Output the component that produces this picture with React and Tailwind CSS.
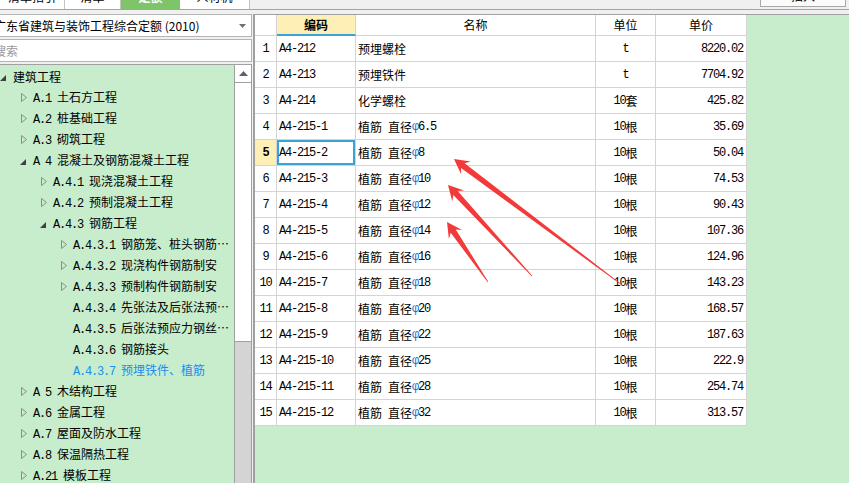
const MONO = "font-['Liberation_Mono',monospace] text-[12px] tracking-[-1.2px]";

function Mix({ s }) {
  const runs = [];
  for (const ch of s) {
    const half = ch.charCodeAt(0) < 0x2000;
    const last = runs[runs.length - 1];
    if (last && last.half === half) last.text += ch;
    else runs.push({ half, text: ch });
  }
  return runs.map((r, i) =>
    r.half ? (
      <span key={i} className={`${MONO} whitespace-pre`}>
        {r.text}
      </span>
    ) : (
      <span key={i}>{r.text}</span>
    )
  );
}

const tree = [
  { lv: 0, open: true, t: '建筑工程' },
  { lv: 1, shut: true, t: 'A.1 土石方工程' },
  { lv: 1, shut: true, t: 'A.2 桩基础工程' },
  { lv: 1, shut: true, t: 'A.3 砌筑工程' },
  { lv: 1, open: true, t: 'A 4 混凝土及钢筋混凝土工程' },
  { lv: 2, shut: true, t: 'A.4.1 现浇混凝土工程' },
  { lv: 2, shut: true, t: 'A.4.2 预制混凝土工程' },
  { lv: 2, open: true, t: 'A.4.3 钢筋工程' },
  { lv: 3, shut: true, t: 'A.4.3.1 钢筋笼、桩头钢筋…' },
  { lv: 3, shut: true, t: 'A.4.3.2 现浇构件钢筋制安' },
  { lv: 3, shut: true, t: 'A.4.3.3 预制构件钢筋制安' },
  { lv: 3, t: 'A.4.3.4 先张法及后张法预…' },
  { lv: 3, t: 'A.4.3.5 后张法预应力钢丝…' },
  { lv: 3, t: 'A.4.3.6 钢筋接头' },
  { lv: 3, t: 'A.4.3.7 预埋铁件、植筋', sel: true },
  { lv: 1, shut: true, t: 'A 5 木结构工程' },
  { lv: 1, shut: true, t: 'A.6 金属工程' },
  { lv: 1, shut: true, t: 'A.7 屋面及防水工程' },
  { lv: 1, shut: true, t: 'A.8 保温隔热工程' },
  { lv: 1, shut: true, t: 'A.21 模板工程' },
];

const indent = ['pl-0', 'pl-5', 'pl-10', 'pl-15'];

const rows = [
  ['A4-212', '预埋螺栓', null, 't', '8220.02'],
  ['A4-213', '预埋铁件', null, 't', '7704.92'],
  ['A4-214', '化学螺栓', null, '10套', '425.82'],
  ['A4-215-1', '植筋 直径', '6.5', '10根', '35.69'],
  ['A4-215-2', '植筋 直径', '8', '10根', '50.04'],
  ['A4-215-3', '植筋 直径', '10', '10根', '74.53'],
  ['A4-215-4', '植筋 直径', '12', '10根', '90.43'],
  ['A4-215-5', '植筋 直径', '14', '10根', '107.36'],
  ['A4-215-6', '植筋 直径', '16', '10根', '124.96'],
  ['A4-215-7', '植筋 直径', '18', '10根', '143.23'],
  ['A4-215-8', '植筋 直径', '20', '10根', '168.57'],
  ['A4-215-9', '植筋 直径', '22', '10根', '187.63'],
  ['A4-215-10', '植筋 直径', '25', '10根', '222.9'],
  ['A4-215-11', '植筋 直径', '28', '10根', '254.74'],
  ['A4-215-12', '植筋 直径', '32', '10根', '313.57'],
];

function arrowPoints(tx, ty, px, py) {
  const dx = px - tx;
  const dy = py - ty;
  const len = Math.hypot(dx, dy);
  const ux = dx / len;
  const uy = dy / len;
  const nx = -uy;
  const ny = ux;
  const head = 15;
  const neck = head - 4;
  const pts = [
    [tx + nx * 0.4, ty + ny * 0.4],
    [px - ux * neck + nx * 3, py - uy * neck + ny * 3],
    [px - ux * head + nx * 8, py - uy * head + ny * 8],
    [px, py],
    [px - ux * head - nx * 8, py - uy * head - ny * 8],
    [px - ux * neck - nx * 3, py - uy * neck - ny * 3],
    [tx - nx * 0.4, ty - ny * 0.4],
  ];
  return pts.map((p) => p.map((v) => v.toFixed(1)).join(',')).join(' ');
}

function Collapsed() {
  return (
    <svg width="6" height="9" viewBox="0 0 6 9" className="ml-[1px]">
      <path d="M0.5 0.5L5.5 4.5L0.5 8.5Z" fill="none" stroke="#8c8c8c" strokeWidth="1" />
    </svg>
  );
}

function Expanded() {
  return (
    <svg width="6" height="6" viewBox="0 0 6 6" className="mt-[3px]">
      <path d="M6 0L6 6L0 6Z" fill="#404040" />
    </svg>
  );
}

export default function App() {
  return (
    <div className="relative w-[849px] h-[483px] overflow-hidden bg-[#f0f0f0] font-['Noto_Sans_CJK_SC',sans-serif] text-[12px] text-black">
      {/* tab strip, cut off at the top */}
      <div className="h-[14px]">
        <div className="flex h-[9px] overflow-hidden">
          <div className="w-[65px] bg-white border-r border-[#c4c4c4] flex justify-center">
            <span className="leading-[12px] mt-[-9px] whitespace-nowrap">清单指引</span>
          </div>
          <div className="w-[56px] bg-white border-r border-[#c4c4c4] flex justify-center">
            <span className="leading-[12px] mt-[-9px]">清单</span>
          </div>
          <div className="w-[59px] bg-[#80c46a] flex justify-center">
            <span className="leading-[12px] mt-[-9px] text-white font-bold">定额</span>
          </div>
          <div className="w-[70px] bg-white border-r border-[#c4c4c4] flex justify-center">
            <span className="leading-[12px] mt-[-9px]">人材机</span>
          </div>
          <div className="ml-auto mr-[3px] w-[86px] h-[7px] bg-[#fbfbfb] border border-t-0 border-[#a8a8a8] flex justify-center overflow-hidden">
            <span className="leading-[12px] mt-[-10px]">插入</span>
          </div>
        </div>
        <div className="h-px bg-[#7dc36b]" />
      </div>

      <div className="flex h-[469px]">
        {/* left: library + tree */}
        <div className="w-[253px] flex flex-col">
          <div className="h-[23px] mr-[1px] bg-white border border-l-0 border-[#b4b4b4] flex items-center overflow-hidden relative">
            <span className="ml-[-6px] whitespace-nowrap">广东省建筑与装饰工程综合定额 (2010)</span>
            <svg width="7" height="4" viewBox="0 0 7 4" className="absolute right-[5px] top-[9px]">
              <path d="M0 0H7L3.5 4Z" fill="#707070" />
            </svg>
          </div>
          <div className="h-[23px] mt-[2px] mr-[1px] bg-white border border-l-0 border-[#b4b4b4] flex items-center overflow-hidden">
            <span className="ml-[-6px] text-[#9a9a9a]">搜索</span>
          </div>
          <div className="flex-1 min-h-0 mt-[2px] mr-[1px] flex border-t border-[#a0a0a0]">
            <div className="flex-1 bg-[#c7edcc] pt-[1px] overflow-hidden">
              {tree.map((n, i) => (
                <div key={i} className={`h-[21px] flex items-center whitespace-nowrap ${indent[n.lv]}`}>
                  <div className="w-[13px] h-[21px] flex items-center">
                    {n.shut ? <Collapsed /> : n.open ? <Expanded /> : null}
                  </div>
                  <div className={n.sel ? 'text-[#1a8cf0]' : ''}>
                    <Mix s={n.t} />
                  </div>
                </div>
              ))}
            </div>
            <div className="w-[18px] flex flex-col border-l border-r border-[#a0a0a0]">
              <div className="h-[18px] bg-white border-b border-[#a0a0a0] flex items-center justify-center">
                <svg width="9" height="5" viewBox="0 0 9 5">
                  <path d="M0 5L4.5 0L9 5Z" fill="#5c6272" />
                </svg>
              </div>
              <div className="h-[259px] bg-white border-b border-[#a0a0a0]" />
              <div className="flex-1 bg-[#d4d4d4]" />
            </div>
          </div>
        </div>

        {/* right: quota table */}
        <div className="flex-1 bg-[#c7edcc] border-l-2 border-t border-[#a0a0a0]">
          <div className="w-[492px] bg-white grid grid-cols-[22px_79px_240px_60px_91px]">
            <div className="h-[21px] border-r border-b border-[#d4d4d4]" />
            <div className="h-[21px] border-r border-b-2 border-r-[#d4d4d4] border-b-[#3aa3d4] bg-[#feefb7] flex items-center justify-center font-bold">
              编码
            </div>
            <div className="h-[21px] border-r border-b border-[#d4d4d4] flex items-center justify-center">名称</div>
            <div className="h-[21px] border-r border-b border-[#d4d4d4] flex items-center justify-center">单位</div>
            <div className="h-[21px] border-r border-b border-[#d4d4d4] flex items-center justify-center">单价</div>

            {rows.map((r, i) => {
              const cur = i === 4;
              return [
                <div
                  key={`n${i}`}
                  className={`h-[26px] border-r border-b border-[#d4d4d4] flex items-center justify-center ${
                    cur ? 'bg-[#feefb7] font-bold' : ''
                  }`}
                >
                  <span className={MONO}>{i + 1}</span>
                </div>,
                <div
                  key={`c${i}`}
                  className={`h-[26px] border-r border-b border-[#d4d4d4] flex items-center pl-[2px] ${
                    cur ? 'shadow-[inset_0_0_0_2px_#3ba2d4]' : ''
                  }`}
                >
                  <span className={MONO}>{r[0]}</span>
                </div>,
                <div key={`m${i}`} className="h-[26px] border-r border-b border-[#d4d4d4] flex items-center pl-[2px] whitespace-pre">
                  <Mix s={r[1]} />
                  {r[2] && (
                    <>
                      <span className={`${MONO} text-[#2f62d0]`}>φ</span>
                      <span className={MONO}>{r[2]}</span>
                    </>
                  )}
                </div>,
                <div key={`u${i}`} className="h-[26px] border-r border-b border-[#d4d4d4] flex items-center justify-center">
                  <Mix s={r[3]} />
                </div>,
                <div key={`p${i}`} className="h-[26px] border-r border-b border-[#d4d4d4] flex items-center justify-end pr-[3px]">
                  <span className={MONO}>{r[4]}</span>
                </div>,
              ];
            })}
          </div>
        </div>
      </div>

      {/* red annotation arrows */}
      <svg className="absolute inset-0 pointer-events-none" width="849" height="483" viewBox="0 0 849 483">
        <polygon points={arrowPoints(622, 285, 454, 159)} fill="#f23a3a" />
        <polygon points={arrowPoints(532, 276, 448, 185)} fill="#f23a3a" />
        <polygon points={arrowPoints(488, 282, 447, 222)} fill="#f23a3a" />
      </svg>
    </div>
  );
}
